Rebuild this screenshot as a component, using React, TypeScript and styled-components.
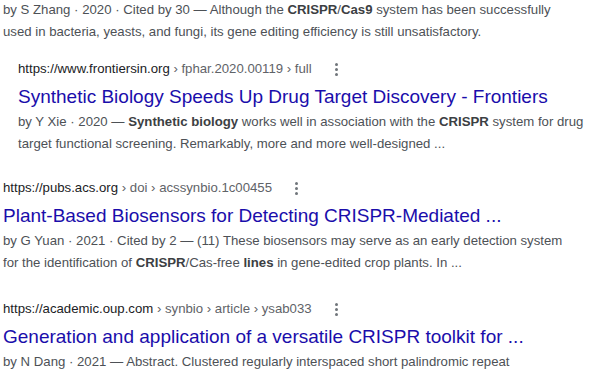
import React from "react";
import styled, { createGlobalStyle } from "styled-components";

const Global = createGlobalStyle`
  html, body { margin: 0; padding: 0; background: #fff; }
  body { font-family: "Liberation Sans", Arial, sans-serif; overflow: hidden; }
`;

const Page = styled.div`
  width: 600px;
  height: 380px;
  overflow: hidden;
  padding-left: 3px;
  box-sizing: border-box;
`;

const Inner = styled.div`
  margin-top: -1px;
  display: flex;
  flex-direction: column;
`;

const Result = styled.div<{ $nested?: boolean; $gap?: number }>`
  display: flex;
  flex-direction: column;
  padding-left: ${(p) => (p.$nested ? 15 : 0)}px;
  margin-top: ${(p) => p.$gap ?? 0}px;
`;

const CiteRow = styled.div`
  display: flex;
  align-items: center;
  height: 22px;
  font-size: 13.2px;
  line-height: 22px;
  white-space: pre;
`;

const Host = styled.span`
  color: #202124;
`;

const Path = styled.span`
  color: #5f6368;
`;

const Dots = styled.span`
  display: inline-flex;
  flex-direction: column;
  gap: 2px;
  margin-left: 21px;
  padding: 0 2px;
  & > i {
    width: 3px;
    height: 3px;
    border-radius: 50%;
    background: #70757a;
    display: block;
  }
`;

const Title = styled.h3`
  margin: 3px 0 0;
  font-size: 19px;
  font-weight: normal;
  line-height: 27px;
  color: #1a0dab;
  white-space: nowrap;
`;

const Snippet = styled.div<{ $first?: boolean }>`
  margin-top: ${(p) => (p.$first ? 0 : 1)}px;
  font-size: 13.2px;
  line-height: 22px;
  color: #4d5156;
  white-space: nowrap;
  & b {
    color: #3c4043;
    font-weight: bold;
  }
`;

type R = {
  host: string;
  path: string;
  title: string;
  snippet: React.ReactNode;
  nested?: boolean;
  gap: number;
};

const results: R[] = [
  {
    host: "https://www.frontiersin.org",
    path: " › fphar.2020.00119 › full",
    title: "Synthetic Biology Speeds Up Drug Target Discovery - Frontiers",
    snippet: (
      <>
        by Y Xie · 2020 — <b>Synthetic biology</b> works well in association with the{" "}
        <b>CRISPR</b> system for drug
        <br />
        target functional screening. Remarkably, more and more well-designed ...
      </>
    ),
    nested: true,
    gap: 15,
  },
  {
    host: "https://pubs.acs.org",
    path: " › doi › acssynbio.1c00455",
    title: "Plant-Based Biosensors for Detecting CRISPR-Mediated ...",
    snippet: (
      <>
        by G Yuan · 2021 · Cited by 2 — (11) These biosensors may serve as an early detection system
        <br />
        for the identification of <b>CRISPR</b>/Cas-free <b>lines</b> in gene-edited crop plants. In ...
      </>
    ),
    gap: 22,
  },
  {
    host: "https://academic.oup.com",
    path: " › synbio › article › ysab033",
    title: "Generation and application of a versatile CRISPR toolkit for ...",
    snippet: (
      <>by N Dang · 2021 — Abstract. Clustered regularly interspaced short palindromic repeat</>
    ),
    gap: 24,
  },
];

export default function App() {
  return (
    <Page>
      <Global />
      <Inner>
        <Snippet $first>
          by S Zhang · 2020 · Cited by 30 — Although the <b>CRISPR</b>/<b>Cas9</b> system has been
          successfully
          <br />
          used in bacteria, yeasts, and fungi, its gene editing efficiency is still unsatisfactory.
        </Snippet>
        {results.map((r) => (
          <Result key={r.host} $nested={r.nested} $gap={r.gap}>
            <CiteRow>
              <Host>{r.host}</Host>
              <Path>{r.path}</Path>
              <Dots>
                <i />
                <i />
                <i />
              </Dots>
            </CiteRow>
            <Title>{r.title}</Title>
            <Snippet>{r.snippet}</Snippet>
          </Result>
        ))}
      </Inner>
    </Page>
  );
}
